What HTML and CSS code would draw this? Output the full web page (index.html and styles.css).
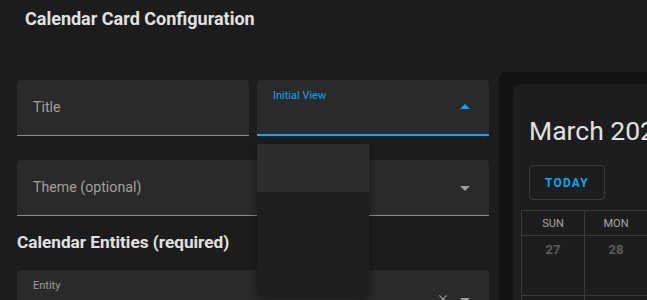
FILE: index.html
```html
<!DOCTYPE html>
<html lang="en">

<head>
    <meta charset="UTF-8">
    <meta name="viewport" content="width=device-width, initial-scale=1.0">
    <title>Calendar Card Configuration</title>
    <link rel="stylesheet" href="styles.css">
</head>

<body>
    <header class="page-header">
        <h1>Calendar Card Configuration</h1>
    </header>

    <div class="main">
        <div class="editor">
            <div class="field-grid">
                <div class="field">
                    <span class="field-placeholder">Title</span>
                </div>
                <div class="field field-focused">
                    <span class="field-label label-active">Initial View</span>
                    <span class="arrow arrow-up"></span>
                    <div class="menu">
                        <div class="menu-item menu-item-selected"></div>
                    </div>
                </div>
                <div class="field field-wide">
                    <span class="field-placeholder">Theme (optional)</span>
                    <span class="arrow arrow-down"></span>
                </div>
            </div>

            <h2 class="section-title">Calendar Entities (required)</h2>

            <div class="field field-wide entity-field">
                <span class="field-label">Entity</span>
                <span class="field-value">calendar.home_events_personal</span>
                <span class="clear-icon">
                    <svg width="14" height="14" viewBox="0 0 24 24"><path d="M19 6.41 17.59 5 12 10.59 6.41 5 5 6.41 10.59 12 5 17.59 6.41 19 12 13.41 17.59 19 19 17.59 13.41 12z" fill="#9e9e9e"/></svg>
                </span>
                <span class="arrow arrow-down"></span>
            </div>
        </div>

        <div class="preview">
            <div class="calendar-card">
                <div class="calendar-title">March 2024</div>
                <button class="today-btn">TODAY</button>
                <table class="calendar-grid">
                    <tr>
                        <th>SUN</th>
                        <th>MON</th>
                        <th>TUE</th>
                        <th>WED</th>
                    </tr>
                    <tr>
                        <td>27</td>
                        <td>28</td>
                        <td>29</td>
                        <td>1</td>
                    </tr>
                    <tr>
                        <td>3</td>
                        <td>4</td>
                        <td>5</td>
                        <td>6</td>
                    </tr>
                </table>
            </div>
        </div>
    </div>
</body>

</html>
```

FILE: styles.css
```css
body {
    font-family: Roboto, "Liberation Sans", sans-serif;
    margin: 0;
    background-color: #1c1c1c;
    color: #e1e1e1;
    width: 647px;
    height: 300px;
    overflow: hidden;
}

.page-header {
    padding: 8px 25px 0;
}

.page-header h1 {
    margin: 0;
    font-size: 18px;
    line-height: 22px;
    font-weight: 700;
}

.main {
    display: flex;
    gap: 10px;
    margin-top: 42px;
    padding-left: 17px;
}

.editor {
    width: 472px;
    flex-shrink: 0;
    padding-top: 8px;
}

.field-grid {
    display: grid;
    grid-template-columns: 232px 232px;
    column-gap: 8px;
    row-gap: 24px;
}

.field {
    position: relative;
    height: 55px;
    background-color: #2a2a2a;
    border-radius: 4px 4px 0 0;
    border-bottom: 1px solid #8c8c8c;
}

.field-wide {
    grid-column: 1 / 3;
}

.field-focused {
    height: 54px;
    border-bottom: 2px solid #03a9f4;
}

.field-placeholder {
    position: absolute;
    left: 16px;
    top: 18px;
    font-size: 14.2px;
    line-height: 18px;
    color: #a0a0a0;
}

.field-label {
    position: absolute;
    left: 16px;
    top: 10px;
    font-size: 11px;
    line-height: 12px;
    color: #9e9e9e;
}

.label-active {
    color: #03a9f4;
}

.field-value {
    position: absolute;
    left: 16px;
    top: 27px;
    font-size: 14.2px;
    line-height: 18px;
    color: #e1e1e1;
}

.arrow {
    position: absolute;
    right: 19px;
    width: 0;
    height: 0;
    border-left: 5px solid transparent;
    border-right: 5px solid transparent;
}

.arrow-up {
    top: 24px;
    border-bottom: 5px solid #03a9f4;
}

.arrow-down {
    top: 26px;
    border-top: 5px solid #9e9e9e;
}

.entity-field .arrow-down {
    top: 28px;
}

.clear-icon {
    position: absolute;
    right: 39px;
    top: 21px;
}

.menu {
    position: absolute;
    left: 0;
    top: 64px;
    width: 112px;
    height: 151px;
    background-color: #1e1e1e;
    border-radius: 0 0 6px 6px;
    box-shadow: 0 4px 10px rgba(0, 0, 0, 0.45);
    z-index: 10;
}

.menu-item {
    height: 48px;
}

.menu-item-selected {
    background-color: #2d2d2d;
}

.section-title {
    margin: 16px 0 18px;
    font-size: 17.2px;
    line-height: 20px;
    font-weight: 700;
}

.preview {
    width: 400px;
    flex-shrink: 0;
    background-color: #121212;
    border-radius: 8px;
    padding: 12px 14px;
    height: 300px;
}

.calendar-card {
    background-color: #1d1d1d;
    border-radius: 8px;
    padding: 31px 8px 0;
    height: 300px;
}

.calendar-title {
    font-size: 26.5px;
    line-height: 32px;
    padding-left: 8px;
    color: #e1e1e1;
}

.today-btn {
    margin: 18px 0 0 8px;
    width: 76px;
    height: 35px;
    background: transparent;
    border: 1px solid #3a3a3a;
    border-radius: 4px;
    color: #03a9f4;
    font-family: Roboto, "Liberation Sans", sans-serif;
    font-size: 12px;
    font-weight: 700;
    letter-spacing: 1.2px;
}

.calendar-grid {
    margin-top: 10px;
    border-collapse: collapse;
}

.calendar-grid th,
.calendar-grid td {
    width: 62px;
    border: 1px solid #3a3a3a;
    text-align: center;
    padding: 0;
}

.calendar-grid th {
    height: 24px;
    font-size: 11px;
    font-weight: 400;
    color: #a8a8a8;
}

.calendar-grid td {
    height: 53px;
    vertical-align: top;
    padding-top: 6px;
    font-size: 13px;
    font-weight: 700;
    color: #5c5c5c;
}
```
